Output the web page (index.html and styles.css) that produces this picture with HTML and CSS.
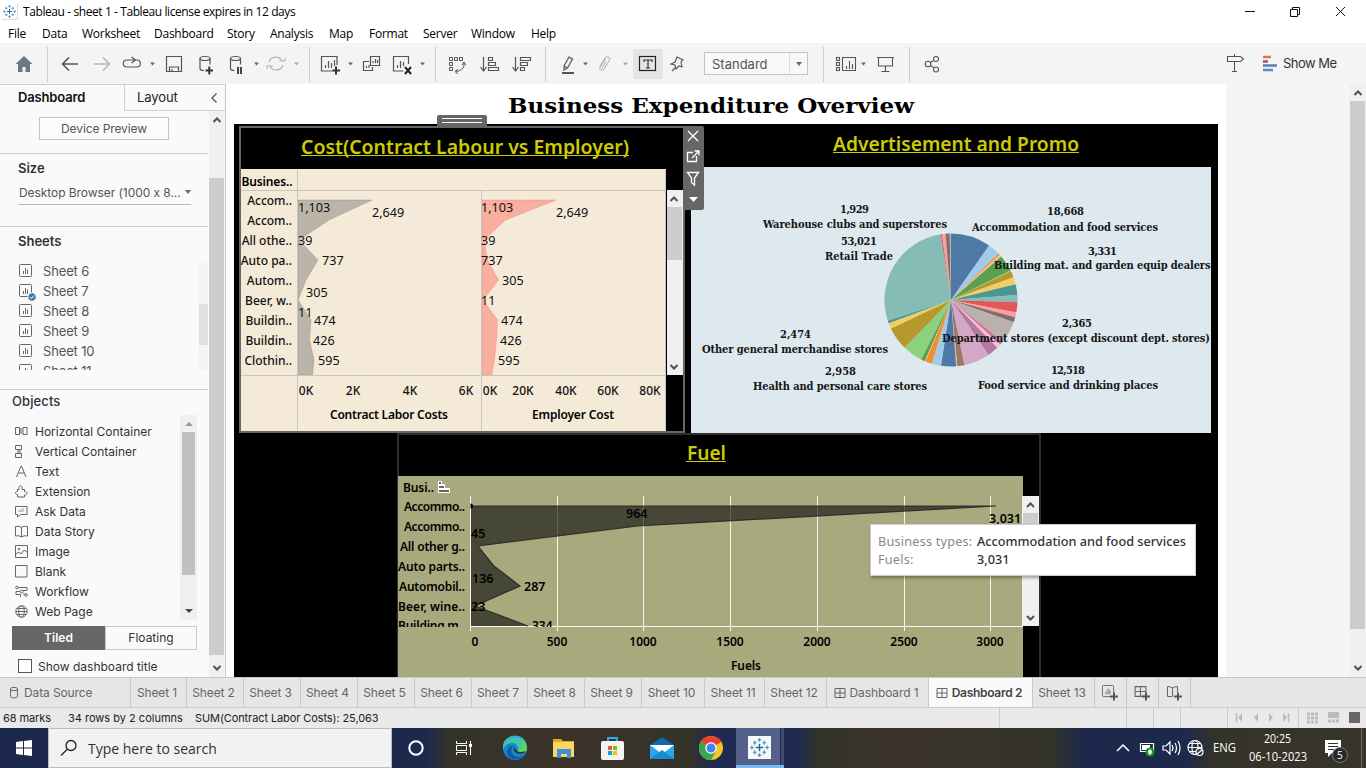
FILE: index.html
```html
<!DOCTYPE html>
<html lang="en">
<head>
<meta charset="utf-8">
<title>Tableau - sheet 1</title>
<link rel="stylesheet" href="styles.css">
</head>
<body>
<svg width="0" height="0" class="defs">
  <defs>
    <symbol id="sheet" viewBox="0 0 14 14"><rect x=".5" y=".5" width="12" height="12" rx="1" fill="none" stroke="#666"/><path d="M4.500 10V7M6.500 10V4M8.500 10V5.500" stroke="#666" fill="none"/></symbol>
    <symbol id="dash" viewBox="0 0 12 12"><path d="M1 1.500h10v9H1zM6 1.500v9M1 6h10" fill="none" stroke="#666"/></symbol>
    <symbol id="up" viewBox="0 0 10 8"><path d="M1.500 6L5 2.500L8.500 6" fill="none" stroke="#505050" stroke-width="2"/></symbol>
    <symbol id="down" viewBox="0 0 10 8"><path d="M1.500 2L5 5.500L8.500 2" fill="none" stroke="#505050" stroke-width="2"/></symbol>
    <symbol id="tableau" viewBox="0 0 20 20"><path d="M10 6v8M6 10h8" stroke="#1f6f9f" stroke-width="1.600"/><path d="M10 0v4M8 2h4M10 16v4M8 18h4M0 10h4M2 8v4M16 10h4M18 8v4M5 3v4M3 5h4M15 3v4M13 5h4M5 13v4M3 15h4M15 13v4M13 15h4" stroke="#4b92bc" stroke-width="1.300"/></symbol>
  </defs>
</svg>

<header class="titlebar">
  <svg class="app-icon" width="16" height="16"><use href="#tableau" x="1" y="1" width="13" height="13"/></svg>
  <span class="app-title">Tableau - sheet 1 - Tableau license expires in 12 days</span>
  <svg class="win-buttons" width="126" height="22" viewBox="1240 0 126 22" fill="none" stroke="#111"><path d="M1245 10.500h10M1290.500 8.500h7v7h-7zM1292.500 8.500v-2h7v7h-2M1336 6l9 9M1345 6l-9 9"/></svg>
</header>
<nav class="menubar">
  <span class="m34">File</span><span class="m40">Data</span><span class="m72">Worksheet</span><span class="m73">Dashboard</span><span class="m43">Story</span><span class="m59">Analysis</span><span class="m40">Map</span><span class="m54">Format</span><span class="m48">Server</span><span class="m60">Window</span><span>Help</span>
</nav>

<div class="toolbar">
  <svg width="704" height="41" viewBox="0 43 704 41" fill="none" stroke="#555" stroke-width="1.2">
    <path d="M47.500 47v35M309.500 47v35M435.500 47v35M545.500 47v35" stroke="#ccc" stroke-width="1"/>
    <path d="M24 56l8.500 8h-2.500v8h-4.500v-5h-3v5H18v-8h-2.500z" fill="#6b7785" stroke="none"/>
    <path d="M78 64H63M69 57.500L62.500 64l6.500 6.500" stroke-width="1.6"/>
    <path d="M94 64h15M103 57.500l6.500 6.500l-6.500 6.500" stroke="#b4b4b4" stroke-width="1.500"/>
    <path d="M133 60h-6c-5 0-5 7 0 7h10c4.500 0 4.500-7 0-7h-4M131.500 57l4 3l-4 3"/>
    <path d="M150 62.500h5l-2.500 3zM254 62.500h5l-2.500 3zM348 62.500h5l-2.500 3zM420 62.500h5l-2.500 3zM583 62.500h5l-2.500 3z" fill="#666" stroke="none"/>
    <path d="M294 62.500h5l-2.500 3zM623 62.500h5l-2.500 3z" fill="#aaa" stroke="none"/>
    <path d="M166.500 56.500h15v15h-15zM169.500 71v-4h9v4M172 71v-2"/>
    <ellipse cx="205" cy="58.500" rx="5" ry="2"/><path d="M200 58.500v10q0 2 4 2M210 58.500v6"/><path d="M205.500 70.500h7.500M209.300 66.500v8" stroke="#333" stroke-width="2"/>
    <ellipse cx="235.500" cy="58.500" rx="5" ry="2"/><path d="M230.500 58.500v10q0 2 4 2M240.500 58.500v6"/><path d="M238 67v7M241 67v7" stroke="#333" stroke-width="1.800"/>
    <path d="M269 62a7 7 0 0 1 13-1M283 65a7 7 0 0 1-13 1M279 61h6v-3M273 66h-6v3" stroke="#b4b4b4"/>
    <path d="M337 65v-8.500h-15.500v14.500h11M325.500 68v-3M328.500 68v-7M331.500 68v-5M334.500 66v-6"/><path d="M332.500 70.500h7.500M336 66.500v8" stroke="#333" stroke-width="2"/>
    <path d="M370.500 56.500h9v9h-9zM369 61.500h-5.500v9h9V67M373 63v-2M375.500 63v-4M377.500 63v-3M366.500 68v-2M369 68v-3"/>
    <path d="M408.500 64v-7.500h-15v14.500h10M397.500 68v-3M400.500 68v-7M403.500 66v-4"/><path d="M405 67l6 7M411 67l-6 7" stroke="#222" stroke-width="2"/>
    <g stroke="#555" stroke-width="1"><path d="M449.500 57.500h3v3h-3zM454.500 57.500h3v3h-3zM459.500 57.500h3v3h-3zM449.500 62.500h3v3h-3zM449.500 67.500h3v3h-3z"/><path d="M464 63v3q-1 4.500-8 5.500M462 65l2-3l2 3M458 69l-3 2.500l3 2.500"/></g>
    <path d="M483.500 57v13M480.500 67l3 4l3-4M488.500 57.500h4v3h-4zM488.500 62.500h7v3h-7zM488.500 67.500h10v3h-10z"/>
    <path d="M515.500 57v13M512.500 67l3 4l3-4M520.500 57.500h10v3h-10zM520.500 62.500h7v3h-7zM520.500 67.500h4v3h-4z"/>
    <path d="M564 66l5-9l3.500 2l-5 9l-3.500 2zM564 66l3.500 2"/><path d="M562 73h12" stroke-width="2"/>
    <path d="M600 66l5-8c2-2.500 6-.5 4.500 2l-5.500 9c-2 2.500-5 .5-4-2l5.500-8M602 68l4-6.500" stroke="#aaa" stroke-width="1"/>
    <rect x="633" y="49" width="30" height="30" fill="#e4e4e4" stroke="none"/><rect x="639.500" y="56.500" width="16" height="14" stroke="#222"/><path d="M644 62v-2h8v2M648 60v8M646 68h4" stroke="#333"/>
    <path d="M677 57l6 3l-2 2l1 5l-3-1l-3 3l-1-4l-4-1l4-2zM676 67l-4 4" stroke-width="1.100"/>
  </svg>
  <div class="select"><span>Standard</span><i></i></div>
  <svg width="558" height="41" viewBox="808 43 558 41" fill="none" stroke="#555" stroke-width="1.100">
    <path d="M823.500 47v35M909.500 47v35" stroke="#ccc"/>
    <path d="M836.500 57.500h3v3h-3zM836.500 62.500h3v3h-3zM836.500 67.500h3v3h-3zM842.500 57.500h13v13h-13zM846.500 69v-3M849.500 69v-8M852.500 69v-5"/><path d="M861 62.500h5l-2.500 3z" fill="#666" stroke="none"/>
    <path d="M877 57.500h17M878.500 58v8h14v-8M885.500 66v5M881.500 71.500h8"/>
    <circle cx="928" cy="64" r="2.800"/><circle cx="936" cy="59" r="2.500"/><circle cx="936" cy="69.500" r="2.500"/><path d="M930.500 62.500l3-2M930.500 65.500l3 2"/>
    <path d="M1234.500 56v-2M1227.500 56.500h13l3 2.500l-3 2.500h-13zM1234.500 61.500v10M1232 71.500h5"/>
    <path d="M1263 57h8" stroke="#e8762b" stroke-width="2.500"/><path d="M1263 61.500h5" stroke="#b24a6a" stroke-width="2.500"/><path d="M1263 65.500h14" stroke="#5b7fb5" stroke-width="2.500"/><path d="M1263 70h10" stroke="#5b8fc5" stroke-width="2.500"/>
    <text x="1283" y="68" class="showme" textLength="54">Show Me</text>
  </svg>
</div>

<main class="workspace">
  <aside class="sidebar">
    <div class="side-tabs"><b>Dashboard</b><div><span>Layout</span><svg width="8" height="12" viewBox="0 0 8 12"><path d="M6.500 1.500L2 6l4.500 4.500" fill="none" stroke="#555" stroke-width="1.300"/></svg></div></div>
    <div class="side-body">
      <div class="side-content">
        <section class="device"><button>Device Preview</button></section>
        <section class="size"><h3>Size</h3><div class="size-select"><span>Desktop Browser (1000 x 8...</span><i></i></div></section>
        <section class="sheets"><h3>Sheets</h3>
          <div class="sheet-wrap"><ul>
            <li><svg width="14" height="14"><use href="#sheet"/></svg>Sheet 6</li>
            <li><svg width="18" height="18" class="used"><use href="#sheet" width="14" height="14"/><circle cx="13" cy="13" r="4.200" fill="#3a7ca0" stroke="#fafafa"/><path d="M11 13l1.500 1.500l2.500-3" fill="none" stroke="#fff"/></svg>Sheet 7</li>
            <li><svg width="14" height="14"><use href="#sheet"/></svg>Sheet 8</li>
            <li><svg width="14" height="14"><use href="#sheet"/></svg>Sheet 9</li>
            <li><svg width="14" height="14"><use href="#sheet"/></svg>Sheet 10</li>
            <li><svg width="14" height="14"><use href="#sheet"/></svg>Sheet 11</li>
          </ul><div class="mini-track"><i></i></div></div>
        </section>
        <section class="objects"><h3>Objects</h3>
          <div class="object-wrap"><ul>
            <li><svg width="13" height="13"><path d="M.5 2.500h4v7h-4zM8 2.500h4v7H8z"/><path d="M5 3h3v6H5z" fill="#aaa" stroke="none"/></svg>Horizontal Container</li>
            <li><svg width="13" height="13"><path d="M.5 .5h6v4h-6zM.5 8.500h6v4h-6z"/><path d="M2 5h4v3H2z" fill="#aaa" stroke="none"/></svg>Vertical Container</li>
            <li><svg width="13" height="13"><path d="M1.500 12L6 1h.5L11 12M3.500 8h6"/></svg>Text</li>
            <li><svg width="13" height="13"><path d="M2.500 4.500h1.500c-1-5 4-5 3 0h2.500v2c3.500 0 3.500 3.500 0 3.500v2h-7V9.500c-3 0-3-3 0-3z"/></svg>Extension</li>
            <li><svg width="13" height="13"><path d="M.5 1.500h11.500v8H5.500l-3 2.500V9.500h-2z"/><path d="M4 7V5M6 7V4M8 7V3" stroke="#999"/></svg>Ask Data</li>
            <li><svg width="13" height="13"><path d="M.5 1.500q4-1 6 1q2-2 6-1v9.500q-4-1-6 1q-2-2-6-1zM6.500 2.500V12"/></svg>Data Story</li>
            <li><svg width="13" height="13"><path d="M.5.5h12v12H.5zM1 9l3-2l2 2l3-4l3 2"/><circle cx="4" cy="4" r=".8"/></svg>Image</li>
            <li><svg width="13" height="13"><path d="M.5.5h11.500v11.500H.5z"/></svg>Blank</li>
            <li><svg width="13" height="13"><circle cx="2" cy="2.500" r="1.300"/><circle cx="6.500" cy="6.500" r="1.500"/><circle cx="11" cy="10" r="1.300"/><path d="M3.500 2.500H12v3H8M5 6.500H1v3h4.500V12M8 9h2"/></svg>Workflow</li>
            <li><svg width="13" height="13"><circle cx="6.500" cy="6.500" r="5.700"/><ellipse cx="6.500" cy="6.500" rx="2.800" ry="5.700"/><path d="M1 6.500h11M2 3.500h9M2 9.500h9"/></svg>Web Page</li>
          </ul>
          <div class="obj-track"><b class="tri-up"></b><i></i><b class="tri-down"></b></div></div>
          <div class="toggle"><b>Tiled</b><span>Floating</span></div>
          <label class="check"><i></i>Show dashboard title</label>
        </section>
      </div>
      <div class="side-scroll"><svg width="10" height="8"><use href="#up"/></svg><i></i><svg width="10" height="8"><use href="#down"/></svg></div>
    </div>
  </aside>

  <div class="page">
    <svg class="page-title" width="984" height="40" viewBox="234 84 984 40"><text x="508" y="113" textLength="406" lengthAdjust="spacingAndGlyphs">Business Expenditure Overview</text></svg>
    <div class="board">
      <div class="row">
        <div class="zone selected">
          <svg class="chart" width="442" height="303" viewBox="241 128 442 303">
            <text class="heading" x="301" y="154" textLength="328" lengthAdjust="spacingAndGlyphs">Cost(Contract Labour vs Employer)</text>
            <path d="M301 155.500h328" stroke="#cc0"/>
            <rect x="241" y="169" width="425" height="263" fill="#f5e9d8"/>
            <path d="M353.500 191v188M410.500 191v188M466.500 191v188M523.500 191v188M566.500 191v188M608.500 191v188M650.500 191v188" stroke="#f0efee"/>
            <path d="M298 200H372L329 220L299 240L318 260L306 280L298 300L311 320L309.500 340L314 360L312.500 375H298z" fill="#76736e" fill-opacity=".45" stroke="#79706e" stroke-opacity=".3"/>
            <path d="M482 200H556L505.500 220L484 240L487.500 260L498.500 280L483 300L497.500 320L496.500 340L494.500 360L491.500 375H482z" fill="#fa8475" fill-opacity=".58" stroke="#fa8475" stroke-opacity=".4"/>
            <path d="M241 190.500h425M241 375.500h425M297.500 170v260M481.500 191v239M665.500 170v260" stroke="#c8c6c4" fill="none"/>
            <text class="bold" x="241.500" y="186" textLength="51">Busines..</text>
            <g class="lab end"><text x="292" y="205">Accom..</text><text x="292" y="225">Accom..</text><text x="292" y="245">All othe..</text><text x="292" y="265">Auto pa..</text><text x="292" y="285">Autom..</text><text x="292" y="305">Beer, w..</text><text x="292" y="325">Buildin..</text><text x="292" y="345">Buildin..</text><text x="292" y="365">Clothin..</text></g>
            <g class="num"><text x="298" y="212">1,103</text><text x="372" y="217">2,649</text><text x="298" y="245">39</text><text x="322" y="265">737</text><text x="306" y="297">305</text><text x="298" y="317">11</text><text x="314" y="325">474</text><text x="313" y="345">426</text><text x="318" y="365">595</text>
            <text x="481" y="212">1,103</text><text x="556" y="217">2,649</text><text x="481" y="245">39</text><text x="481" y="265">737</text><text x="502" y="285">305</text><text x="481" y="305">11</text><text x="501" y="325">474</text><text x="500" y="345">426</text><text x="498" y="365">595</text></g>
            <g class="lab mid"><text x="306" y="395">0K</text><text x="353" y="395">2K</text><text x="410" y="395">4K</text><text x="466" y="395">6K</text><text x="490" y="395">0K</text><text x="523" y="395">20K</text><text x="566" y="395">40K</text><text x="608" y="395">60K</text><text x="650" y="395">80K</text></g>
            <text class="bold" x="330" y="419" textLength="118">Contract Labor Costs</text><text class="bold" x="532" y="419" textLength="82">Employer Cost</text>
            <rect x="667" y="190" width="16" height="185" fill="#f0f0f0"/><rect x="667" y="207" width="15" height="53" fill="#cdcdcd"/>
            <use href="#up" x="669" y="195" width="10" height="8"/><use href="#down" x="669" y="363" width="10" height="8"/>
          </svg>
          <div class="grip"><i></i><i></i></div>
          <svg class="zone-tools" width="21" height="84" viewBox="683 126 21 84" fill="none" stroke="#fff" stroke-width="1.300"><path d="M688 131l10 10M698 131l-10 10M693 152.500h-5.500v9h9V156M692 158l7-7M694.500 151h4.500v4.500M687.500 172.500h11l-4 5.500v7l-3-2.500V178z"/><path d="M689 197h9l-4.500 5z" fill="#fff" stroke="none"/></svg>
        </div>
        <svg class="zone promo" width="520" height="307" viewBox="691 126 520 307">
          <text class="heading" x="833" y="151" textLength="246" lengthAdjust="spacingAndGlyphs">Advertisement and Promo</text><path d="M833 152.500h246" stroke="#cc0"/>
          <rect x="691" y="167" width="520" height="266" fill="#dde9ef"/>
          <g id="pie"></g>
          <g class="serif">
            <text x="840" y="213" textLength="29">1,929</text><text x="763" y="228" textLength="184">Warehouse clubs and superstores</text>
            <text x="1047" y="215" textLength="37">18,668</text><text x="972" y="231" textLength="186">Accommodation and food services</text>
            <text x="841" y="245" textLength="36">53,021</text><text x="825" y="260" textLength="68">Retail Trade</text>
            <text x="1088" y="255" textLength="29">3,331</text><text x="994" y="269" textLength="216.500">Building mat. and garden equip dealers</text>
            <text x="1062" y="327" textLength="30">2,365</text><text x="942" y="342" textLength="268">Department stores (except discount dept. stores)</text>
            <text x="780" y="338" textLength="31">2,474</text><text x="702" y="353" textLength="186">Other general merchandise stores</text>
            <text x="825" y="375" textLength="31">2,958</text><text x="753" y="390" textLength="174">Health and personal care stores</text>
            <text x="1051" y="374" textLength="34">12,518</text><text x="978" y="389" textLength="180">Food service and drinking places</text>
          </g>
        </svg>
      </div>
      <svg class="fuel" width="644" height="244" viewBox="397 433 644 244">
        <path d="M398 680V434h642v246" fill="none" stroke="#2e2e2e" stroke-width="2"/>
        <text class="heading" x="687" y="460" textLength="39" lengthAdjust="spacingAndGlyphs">Fuel</text><path d="M686 461.500h40" stroke="#cc0"/>
        <rect x="398" y="476" width="625" height="201" fill="#a9a97e"/>
        <path d="M470.500 496v135M557.500 496v135M643.500 496v135M730.500 496v135M817.500 496v135M904.500 496v135M990.500 496v135M470 626.500h553M1022.500 496v131" stroke="#f5f5f0"/>
        <path d="M471 506H996L638 526L478 546L494 566L520 586L475 606L528 626H471z" fill="#0c0c0c" fill-opacity=".62"/>
        <path d="M471 506H996L638 526L478 546L494 566L520 586L475 606L528 626" fill="none" stroke="#222" stroke-opacity=".85" stroke-width="1.200"/>
        <path d="M470.500 503.500a2.500 2.500 0 0 1 0 5z"/>
        <text class="bold" x="403" y="492" textLength="31">Busi..</text>
        <path d="M438 481h4v3h3v4h5v5h-12z" fill="#fff"/><path d="M439 483h2M439 487h5M439 491h10" stroke="#666" stroke-width="1.800"/>
        <g class="bold end"><text x="465" y="511" textLength="61">Accommo..</text><text x="465" y="531" textLength="61">Accommo..</text><text x="465" y="551" textLength="65">All other g..</text><text x="465" y="571" textLength="67">Auto parts..</text><text x="465" y="591" textLength="66">Automobil..</text><text x="465" y="611" textLength="67">Beer, wine..</text></g>
        <g class="bold nums"><text x="626" y="518">964</text><text x="471" y="538">45</text><text x="472" y="583">136</text><text x="524" y="591">287</text><text x="471" y="611">23</text><text x="989" y="523">3,031</text></g>
        <svg x="398" y="616" width="625" height="11" viewBox="398 616 625 11"><text class="bold" x="398" y="630" textLength="67">Building m..</text><text class="bold" x="532" y="630">334</text></svg>
        <g class="bold mid"><text x="475" y="646">0</text><text x="557" y="646">500</text><text x="643" y="646">1000</text><text x="730" y="646">1500</text><text x="817" y="646">2000</text><text x="904" y="646">2500</text><text x="990" y="646">3000</text><text x="746" y="670" textLength="30">Fuels</text></g>
        <rect x="1023" y="496" width="16" height="130" fill="#f0f0f0"/><rect x="1023" y="513" width="15" height="40" fill="#cdcdcd"/>
        <use href="#up" x="1025.500" y="501" width="10" height="8"/><use href="#down" x="1025.500" y="614" width="10" height="8"/>
      </svg>
      <div class="tooltip"><span>Business types:</span><b>Accommodation and food services</b><span>Fuels:</span><b>3,031</b></div>
    </div>
  </div>
  <div class="outside"></div>
  <div class="main-scroll"><svg width="10" height="8"><use href="#up"/></svg><i></i><svg width="10" height="8"><use href="#down"/></svg></div>
</main>

<nav class="sheet-tabs">
  <span class="source"><svg width="10" height="13" fill="none" stroke="#666"><ellipse cx="5" cy="3" rx="3.500" ry="1.700"/><path d="M1.500 3v7q0 2 3.500 2t3.500-2V3"/></svg>Data Source</span>
  <span class="w56">Sheet 1</span><span>Sheet 2</span><span>Sheet 3</span><span>Sheet 4</span><span>Sheet 5</span><span>Sheet 6</span><span class="w56">Sheet 7</span><span>Sheet 8</span><span>Sheet 9</span><span class="w63">Sheet 10</span><span class="w60">Sheet 11</span><span class="w62">Sheet 12</span>
  <span class="w102"><svg width="12" height="12"><use href="#dash"/></svg>Dashboard 1</span><span class="current"><svg width="12" height="12"><use href="#dash"/></svg>Dashboard 2</span><span class="w62">Sheet 13</span>
  <span class="w32"><svg width="17" height="16"><use href="#sheet" width="13" height="13"/><path d="M8 11.500h8M12 7.500v8" stroke="#555" stroke-width="2"/></svg></span>
  <span class="w32"><svg width="17" height="16"><use href="#dash" width="13" height="13"/><path d="M8 11.500h8M12 7.500v8" stroke="#555" stroke-width="2"/></svg></span>
  <span class="w32"><svg width="17" height="16"><path d="M1.500 1.500q3 0 5 1.500q2-1.500 5-1.500v6M1.500 1.500v10h5V3" fill="none" stroke="#666"/><path d="M8 11.500h8M12 7.500v8" stroke="#555" stroke-width="2"/></svg></span>
</nav>
<footer class="status"><span class="s1">68 marks</span><span class="s2">34 rows by 2 columns</span><span>SUM(Contract Labor Costs): 25,063</span>
  <svg width="368" height="20" viewBox="998 708 368 20"><path d="M999.500 708v20M1126.500 708v20M1153.500 708v20M1180.500 708v20M1227.500 708v20M1298.500 708v20" stroke="#ccc"/><path d="M1236.500 713v9" stroke="#bbb" stroke-width="1.500"/><path d="M1242 713v9l-4-4.500zM1258 713v9l-4-4.500zM1269 713v9l4-4.500zM1283 713v9l4-4.500z" fill="#bbb"/><path d="M1288.500 713v9" stroke="#bbb" stroke-width="1.500"/><path d="M1307 714h11M1307 718h11M1307 722h11" stroke="#bbb" stroke-width="3" stroke-dasharray="3 1"/><path d="M1328 712h11v6h-11z" fill="#bbb"/><path d="M1328 721h11" stroke="#bbb" stroke-width="3" stroke-dasharray="3 1"/><path d="M1349 712h11v11h-11z" fill="#666"/></svg>
</footer>
<footer class="taskbar">
  <svg class="start" width="48" height="40"><path d="M16 14l7-1v6.500h-7zM24 13l8-1v7.500h-8zM16 20.500h7V27l-7-1zM24 20.500h8V28l-8-1z" fill="#fff"/></svg>
  <div class="search"><svg width="18" height="18" fill="none" stroke="#222" stroke-width="1.300"><circle cx="11" cy="6.500" r="5"/><path d="M7 10.500l-6 6"/></svg><span>Type here to search</span></div>
  <svg width="974" height="40" viewBox="392 728 974 40">
    <circle cx="416" cy="748" r="6.700" fill="none" stroke="#fff" stroke-width="2"/>
    <path d="M456.500 741v2.500h10V741M456.500 755v-2.500h10v2.500M456.500 745.500h10v5h-10zM470.500 741v14" fill="none" stroke="#fff"/><path d="M469 744h3v3h-3z" fill="#fff"/>
    <circle cx="515" cy="748" r="12" fill="#1685d3"/><path d="M503 747c0-15 24-15 24 1c0 5-6 6-10 4c3-4 0-9-5-9c-5 0-8 3-9 7z" fill="#43c6a1"/><path d="M504 744c3-10 18-11 21-2c-7-7-17-4-21 2z" fill="#2fb0dc"/><path d="M522 740c5 3 6 9 4 11c-2 2-6 2-8 1c4-4 6-8 4-12z" fill="#5fd35c"/><path d="M513 746c-5 7 2 13 10 10c-6 6-15 3-16-3c0-5 3-7 6-7z" fill="#105aa3"/><path d="M514 747c-2 5 4 8 10 6l1-2q-5 2-8 0z" fill="#34342a"/>
    <path d="M553 739h8l2 2h11v16h-21z" fill="#e8a617"/><path d="M553 742h21v15h-21z" fill="#fbd663"/><path d="M557 758v-9h14v9h-4v-4h-6v4z" fill="#3d92d4"/>
    <path d="M608 742v-4h9v4" fill="none" stroke="#27aee5" stroke-width="2"/><rect x="601" y="741" width="23" height="19" rx="2" fill="#f3f3f3"/><path d="M608 746h4v4h-4z" fill="#f35325"/><path d="M613 746h4v4h-4z" fill="#81bc06"/><path d="M608 751h4v4h-4z" fill="#05a6f0"/><path d="M613 751h4v4h-4z" fill="#ffba08"/>
    <path d="M650 745l12-8l12 8z" fill="#1068ad"/><path d="M650 745h24v14h-24z" fill="#28a8ea"/><path d="M650 745h24l-12 9z" fill="#fff"/><path d="M650 759l12-9l12 9z" fill="#168bd0"/>
    <circle cx="711" cy="748" r="12" fill="#f4c524"/><path d="M711 748L700.600 742A12 12 0 0 1 721.400 742z" fill="#e64132"/><path d="M711 748l-10.400-6A12 12 0 0 0 711 760l5-9z" fill="#35a853"/><circle cx="711" cy="748" r="5.800" fill="#fff"/><circle cx="711" cy="748" r="4.500" fill="#4285f4"/>
    <path d="M736 728h44v40h-44z" fill="#53618a"/><path d="M781 728h3v40h-3z" fill="#414b6d"/><path d="M736 765h48v3h-48z" fill="#76b9ed"/><rect x="748" y="736" width="23" height="23" fill="#f6f9fa"/><use href="#tableau" x="750" y="738" width="19" height="19"/>
    <g fill="none" stroke="#fff" stroke-width="1.200"><path d="M1117 751l6-6l6 6" stroke-width="1.500"/><path d="M1140.500 743.500h13v8h-13z"/><path d="M1163 746h3l4-4v12l-4-4h-3zM1172 745q2 3 0 6M1175 743q3 5 0 10M1178 741q4 7 0 14"/><circle cx="1195" cy="747.500" r="7"/><ellipse cx="1195" cy="747.500" rx="3" ry="7"/><path d="M1188 747.500h14M1190 743.500h10M1190 751.500h10"/><circle cx="1199.500" cy="752" r="3.500" fill="#333a48"/><path d="M1197 754l5-4"/></g>
    <path d="M1142 745h8v5h-8z" fill="#fff"/><circle cx="1150" cy="752" r="4.500" fill="#17952b"/><path d="M1150 749q4 3 0 6q-4-3 0-6z" fill="#fff"/>
    <g class="tray"><text x="1213" y="752" textLength="23" lengthAdjust="spacingAndGlyphs">ENG</text><text x="1264" y="743" textLength="27" lengthAdjust="spacingAndGlyphs">20:25</text><text x="1249" y="761" textLength="58" lengthAdjust="spacingAndGlyphs">06-10-2023</text></g>
    <path d="M1325 740h16v13h-9l-4 4v-4h-3z" fill="#fff"/><path d="M1328 743.500h10M1328 746.500h10M1328 749.500h6" stroke="#333"/><circle cx="1340" cy="755" r="7.500" fill="#292929" stroke="#777"/><text class="count" x="1337" y="759">5</text><path d="M1361.500 728v40" stroke="#666"/>
  </svg>
</footer>
<script src="pie.js"></script>
</body>
</html>
```
FILE: pie.js
```js
// Each slice: [end angle in degrees clockwise from the top, colour]
const slices = [
  [35, '#4e79a7'], [45.6, '#a0cbe8'], [47, '#f28e2b'], [49.1, '#ffbe7d'], [63.6, '#59a14f'], [64.4, '#8cd17d'],
  [70.1, '#b6992d'], [76.4, '#f1ce63'], [85.7, '#499894'], [92, '#86bcb6'], [100.8, '#e15759'], [105, '#ff9d9a'],
  [109.5, '#79706e'], [128.9, '#bab0ac'], [132.2, '#d37295'], [136, '#fabfd2'], [145.8, '#b07aa1'], [168.4, '#d4a6c8'],
  [174.5, '#9d7660'], [175.6, '#d7b5a6'], [188.7, '#4e79a7'], [196.7, '#a0cbe8'], [202.6, '#f28e2b'], [203.2, '#ffbe7d'],
  [206.7, '#59a14f'], [224.2, '#8cd17d'], [244.7, '#b6992d'], [249.5, '#f1ce63'], [252, '#499894'], [351.1, '#86bcb6'],
  [352.3, '#e15759'], [355.3, '#ff9d9a'], [358.9, '#79706e'], [360, '#bab0ac']
];
const cx = 951, cy = 300, r = 66.5;
const point = a => [cx + r * Math.sin(a * Math.PI / 180), cy - r * Math.cos(a * Math.PI / 180)].map(v => v.toFixed(2)).join(' ');
let from = 0;
document.getElementById('pie').innerHTML = slices.map(([to, color]) => {
  const d = `M${cx} ${cy}L${point(from)}A${r} ${r} 0 0 1 ${point(to)}z`;
  from = to;
  return `<path d="${d}" fill="${color}"/>`;
}).join('');
```
FILE: styles.css
```css
* { box-sizing: border-box; }
body { margin: 0; width: 1366px; height: 768px; overflow: hidden; background: #fff; font-family: Inter, "Noto Sans", sans-serif; font-size: 12px; font-feature-settings: "calt" 0; color: #333; }
svg { display: block; flex: none; }
.defs { position: absolute; }
ul, h3 { margin: 0; padding: 0; list-style: none; }

.titlebar { height: 23px; display: flex; align-items: center; font-family: "Open Sans", sans-serif; color: #000; }
.app-icon { margin-left: 2px; border: 1px solid #ddd; border-width: 0 1px 1px 0; }
.app-title { margin-left: 5px; font-size: 12px; letter-spacing: -.41px; }
.win-buttons { margin-left: auto; }
.menubar { height: 20px; padding: 1px 0 0 8px; display: flex; align-items: center; font: 12px "Open Sans", sans-serif; letter-spacing: -.25px; color: #000; }
.m34 { width: 34px; } .m40 { width: 40px; } .m72 { width: 72px; } .m73 { width: 73px; } .m43 { width: 43px; } .m59 { width: 59px; } .m54 { width: 54px; } .m48 { width: 48px; } .m60 { width: 60px; }

.toolbar { height: 41px; display: flex; align-items: center; background: #f4f4f4; }
.select { width: 104px; height: 23px; border: 1px solid #c4c4c4; display: flex; align-items: center; font-size: 13px; color: #555; background: #f8f8f8; }
.select span { width: 85px; padding-left: 7px; }
.select i { align-self: stretch; width: 18px; border-left: 1px solid #ddd; display: grid; place-items: center; }
.select i::after, .size-select i { content: ""; border: 3.5px solid transparent; border-top: 4px solid #666; border-bottom: 0; }
.showme { font: 13px Inter; fill: #333; stroke: none; }

.workspace { height: 593px; display: flex; }
.sidebar { width: 226px; height: 593px; background: #fafafa; border-right: 1px solid #c8c8c8; border-top: 1px solid #d0d0d0; }
.side-tabs { height: 26px; display: flex; font-size: 13px; line-height: 25px; color: #222; }
.side-tabs b { width: 124px; padding-left: 18px; font-weight: 600; color: #111; letter-spacing: -.15px; }
.side-tabs div { flex: 1; display: flex; align-items: center; justify-content: space-between; padding: 0 7px 0 12px; border-left: 1px solid #d0d0d0; border-bottom: 1px solid #d0d0d0; letter-spacing: -.1px; }
.side-body { display: flex; height: 566px; }
.side-content { width: 209px; }
.side-scroll { width: 15px; background: #f0f0f0; display: flex; flex-direction: column; align-items: center; padding: 5px 0; }
.side-scroll i { width: 15px; height: 478px; margin: 54px 0 9px; background: #cdcdcd; }
.side-content section { width: 208px; border-bottom: 1px solid #ccc; }
.side-content h3 { font-size: 13px; line-height: 16px; font-weight: 600; color: #333; }
.device { height: 43px; padding: 6px 0 0 39px; }
.device button { width: 130px; height: 23px; padding: 0 0 1px; border: 1px solid #c4c4c4; background: #fcfcfc; font: 12px Inter; letter-spacing: -.1px; color: #555; }
.size { height: 73px; padding: 6px 0 0 18px; }
.size-select { margin-top: 7px; width: 173px; height: 22px; display: flex; align-items: center; justify-content: space-between; border-bottom: 1px solid #bbb; color: #555; padding: 0 0 3px 1px; white-space: nowrap; letter-spacing: -.06px; }
.sheets { height: 163px; padding: 6px 0 0; }
.sheets h3 { padding-left: 18px; }
.sheet-wrap { margin-top: 12px; height: 109px; overflow: hidden; display: flex; justify-content: space-between; }
.sheet-wrap li { display: flex; align-items: center; height: 20px; padding-left: 19px; gap: 10px; font-size: 13px; letter-spacing: -.15px; color: #555; }
.used { margin: 3px -4px 0 0; }
.mini-track { width: 9px; background: #f4f4f4; padding-top: 43px; }
.mini-track i { display: block; height: 41px; background: #e0e0e0; }
.side-content .objects { border: 0; padding: 3px 0 0 12px; }
.objects h3 { font-weight: 500; letter-spacing: .1px; }
.object-wrap { display: flex; justify-content: space-between; width: 185px; margin-top: 6px; height: 205px; }
.objects ul { padding-top: 6px; }
.objects li { height: 20px; display: flex; align-items: center; gap: 7px; padding-left: 3px; white-space: nowrap; color: #333; }
.objects li svg { fill: none; stroke: #666; }
.obj-track { width: 17px; background: #f0f0f0; display: flex; flex-direction: column; align-items: center; }
.obj-track i { width: 13px; height: 143px; background: #c1c1c1; margin: 6px 0 34px; }
.tri-up { margin-top: 7px; border: 4px solid transparent; border-bottom: 4px solid #999; border-top: 0; }
.tri-down { border: 4px solid transparent; border-top: 4px solid #444; border-bottom: 0; }
.toggle { width: 185px; height: 24px; display: flex; margin-top: 6px; line-height: 22px; text-align: center; }
.toggle b { width: 93px; background: #666; color: #fff; font-weight: 600; line-height: 24px; }
.toggle span { flex: 1; border: 1px solid #c8c8c8; }
.check { display: flex; align-items: center; gap: 6px; height: 14px; margin: 9px 0 0 6px; }
.check i { width: 14px; height: 14px; border: 1px solid #555; background: #fff; }

.page { width: 1000px; height: 593px; padding-left: 8px; overflow: hidden; }
.page-title text { font: bold 21px "DejaVu Serif", serif; fill: #000; }
.board { width: 984px; height: 553px; background: #000; padding-top: 2px; position: relative; }
.row { display: flex; padding-left: 5px; }
.zone.selected { position: relative; width: 446px; height: 307px; border: 2px solid #666; margin-right: 6px; }
.grip { position: absolute; left: 196px; top: -13px; width: 50px; height: 11px; background: #666; border-radius: 2px 2px 0 0; padding: 3px 5px; display: grid; gap: 3px; }
.grip i { height: 1px; background: #fff; }
.zone-tools { position: absolute; left: 442px; top: -2px; background: #666; border-radius: 0 2px 2px 0; }
.fuel { margin-left: 163px; }
.heading { font: 600 20.500px "Noto Sans", sans-serif; fill: #cc0; }
.lab, .num, .bold { font: 500 12px "Noto Sans", sans-serif; fill: #111; }
.num { font-size: 12.600px; font-weight: 400; }
.bold { font-weight: 600; font-size: 12px; fill: #000; }
.nums { font-weight: 600; font-size: 12.500px; }
.end { text-anchor: end; }
.mid { text-anchor: middle; }
.serif { font: bold 11px "DejaVu Serif Condensed", "DejaVu Serif", serif; fill: #151515; }
.tooltip { position: absolute; left: 636px; top: 400px; width: 326px; height: 52px; background: #fff; border: 1px solid #ccc; box-shadow: 1px 2px 3px #0005; padding: 7px; display: grid; grid-template-columns: 99px 1fr; grid-auto-rows: 18px; font: 12.700px/18px "Noto Sans", sans-serif; white-space: nowrap; }
.tooltip span { color: #888; letter-spacing: .2px; }
.tooltip b { font-weight: 500; color: #333; }
.outside { flex: 1; background: #f5f5f5; }
.main-scroll { width: 17px; background: #f0f0f0; display: flex; flex-direction: column; align-items: center; padding: 5px 0; }
.main-scroll i { width: 15px; height: 528px; margin: 4px 0 auto; background: #cdcdcd; }

.sheet-tabs { height: 31px; display: flex; background: #e6e6e6; border-top: 1px solid #c8c8c8; border-bottom: 1px solid #ccc; }
.sheet-tabs span { width: 57px; border-right: 1px solid #c8c8c8; display: flex; align-items: center; justify-content: center; gap: 4px; padding-right: 3px; white-space: nowrap; letter-spacing: -.12px; color: #666; }
.sheet-tabs .source { width: 131px; justify-content: flex-start; padding-left: 9px; gap: 5px; }
.sheet-tabs .w56 { width: 56px; } .sheet-tabs .w63 { width: 63px; } .sheet-tabs .w60 { width: 60px; } .sheet-tabs .w62 { width: 62px; } .sheet-tabs .w102 { width: 102px; } .sheet-tabs .w32 { width: 32px; padding: 0; }
.sheet-tabs .current { width: 104px; background: #fafafa; font-weight: 600; color: #444; letter-spacing: -.3px; }
.status { height: 20px; background: #e9e9e9; display: flex; align-items: center; padding-left: 3px; font-size: 11px; letter-spacing: -.1px; color: #222; }
.s1 { width: 65px; } .s2 { width: 127px; letter-spacing: 0; }
.status svg { margin-left: auto; }
.taskbar { height: 40px; display: flex; background: linear-gradient(90deg, #1c294d 0, #1c294d 425px, #34332a 450px, #3c3329 570px, #34332a 690px, #1e2a50 715px, #1e2a50 796px, #34332a 820px, #3a3329 900px, #34332a 1050px, #1c294d 1085px, #1c294d 1185px, #34332a 1215px, #38342a); }
.search { width: 344px; background: #f2f2f2; border: 1px solid #bbb; display: flex; align-items: center; padding-left: 11px; gap: 10px; font: 14px "Open Sans", sans-serif; color: #333; }
.tray { font: 12px "Open Sans", sans-serif; fill: #fff; }
.count { font: 10px "Open Sans", sans-serif; fill: #fff; }
```
